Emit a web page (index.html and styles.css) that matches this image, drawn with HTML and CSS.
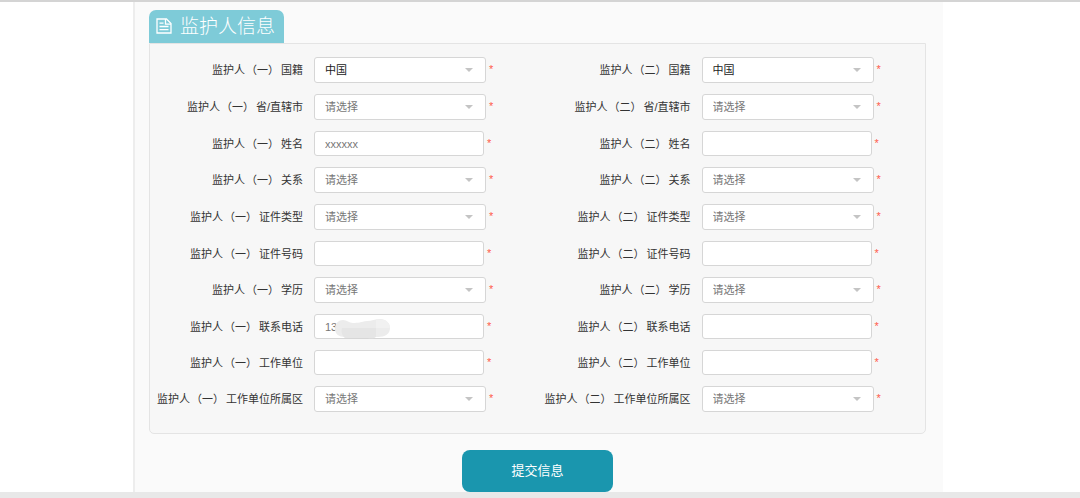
FILE: index.html
```html
<!DOCTYPE html>
<html lang="zh-CN">
<head>
<meta charset="utf-8">
<meta name="viewport" content="width=device-width, initial-scale=1">
<title>监护人信息</title>
<link rel="stylesheet" href="styles.css">
</head>
<body>
<main class="page">
  <form class="sheet" onsubmit="return false">
    <h1 class="tab">
      <svg class="tab-icon" viewBox="0 0 16 16" width="16" height="16" fill="none" stroke="currentColor" stroke-width="1.3" aria-hidden="true">
        <path d="M1 1h9.500l4.500 4.500V15H1z"/>
        <path d="M9.500 1v5.200H15"/>
        <path d="M3.500 5.200h4M3.500 8.500h9M3.500 11.700h9"/>
      </svg>
      <span>监护人信息</span>
    </h1>
    <section class="panel">
      <div class="field"><label for="a1">监护人<span class="no">（一）</span>国籍</label><span class="pick"><select id="a1" class="filled"><option>中国</option></select></span><i class="star">*</i></div>
      <div class="field"><label for="b1">监护人<span class="no">（二）</span>国籍</label><span class="pick"><select id="b1" class="filled"><option>中国</option></select></span><i class="star">*</i></div>
      <div class="field"><label for="a2">监护人<span class="no">（一）</span>省/直辖市</label><span class="pick"><select id="a2"><option>请选择</option></select></span><i class="star">*</i></div>
      <div class="field"><label for="b2">监护人<span class="no">（二）</span>省/直辖市</label><span class="pick"><select id="b2"><option>请选择</option></select></span><i class="star">*</i></div>
      <div class="field"><label for="a3">监护人<span class="no">（一）</span>姓名</label><input id="a3" type="text" value="xxxxxx"><i class="star">*</i></div>
      <div class="field"><label for="b3">监护人<span class="no">（二）</span>姓名</label><input id="b3" type="text"><i class="star">*</i></div>
      <div class="field"><label for="a4">监护人<span class="no">（一）</span>关系</label><span class="pick"><select id="a4"><option>请选择</option></select></span><i class="star">*</i></div>
      <div class="field"><label for="b4">监护人<span class="no">（二）</span>关系</label><span class="pick"><select id="b4"><option>请选择</option></select></span><i class="star">*</i></div>
      <div class="field"><label for="a5">监护人<span class="no">（一）</span>证件类型</label><span class="pick"><select id="a5"><option>请选择</option></select></span><i class="star">*</i></div>
      <div class="field"><label for="b5">监护人<span class="no">（二）</span>证件类型</label><span class="pick"><select id="b5"><option>请选择</option></select></span><i class="star">*</i></div>
      <div class="field"><label for="a6">监护人<span class="no">（一）</span>证件号码</label><input id="a6" type="text"><i class="star">*</i></div>
      <div class="field"><label for="b6">监护人<span class="no">（二）</span>证件号码</label><input id="b6" type="text"><i class="star">*</i></div>
      <div class="field"><label for="a7">监护人<span class="no">（一）</span>学历</label><span class="pick"><select id="a7"><option>请选择</option></select></span><i class="star">*</i></div>
      <div class="field"><label for="b7">监护人<span class="no">（二）</span>学历</label><span class="pick"><select id="b7"><option>请选择</option></select></span><i class="star">*</i></div>
      <div class="field"><label for="a8">监护人<span class="no">（一）</span>联系电话</label><span class="masked"><input id="a8" type="text" value="13"><svg class="smudge" viewBox="0 0 58 20" width="58" height="20" aria-hidden="true">
        <path fill="#ececec" d="M2 10C2 4 6 1 10 1c4 0 6 3 10 3 5 0 8-1 14-2 5 0 8-2 13-2 6 0 10 4 10 9 0 6-5 9-12 9H12C6 18 2 15 2 10z"/>
        <path fill="#e5e5e5" d="M9 9h34v9c-2 2-6 1-9 1H12c-3-2-4-6-3-10z"/>
        <path fill="#f1f1f1" d="M43 1c7-2 14 1 14 8H43z"/>
      </svg></span><i class="star">*</i></div>
      <div class="field"><label for="b8">监护人<span class="no">（二）</span>联系电话</label><input id="b8" type="text"><i class="star">*</i></div>
      <div class="field"><label for="a9">监护人<span class="no">（一）</span>工作单位</label><input id="a9" type="text"><i class="star">*</i></div>
      <div class="field"><label for="b9">监护人<span class="no">（二）</span>工作单位</label><input id="b9" type="text"><i class="star">*</i></div>
      <div class="field"><label for="a10">监护人<span class="no">（一）</span>工作单位所属区</label><span class="pick"><select id="a10"><option>请选择</option></select></span><i class="star">*</i></div>
      <div class="field"><label for="b10">监护人<span class="no">（二）</span>工作单位所属区</label><span class="pick"><select id="b10"><option>请选择</option></select></span><i class="star">*</i></div>
    </section>
    <button class="submit" type="submit">提交信息</button>
  </form>
</main>
</body>
</html>
```
FILE: styles.css
```css
* {
  box-sizing: border-box;
}

body {
  margin: 0;
  background: #fff;
  color: #333;
  font: 11px/16px "Liberation Sans", "Noto Sans CJK SC", sans-serif;
}

.page {
  padding-right: 4px;
  border-top: 2px solid #d4d4d4;
  border-bottom: 6px solid #e8e8e8;
}

.sheet {
  display: flex;
  flex-direction: column;
  align-items: center;
  max-width: 810px;
  margin: 0 auto;
  padding: 8px 17px 0 14px;
  border-left: 2px solid #ededed;
  background: #fafafa;
}

.tab {
  display: flex;
  align-items: center;
  align-self: flex-start;
  gap: 8px;
  height: 33px;
  margin: 0;
  padding: 0 9px 0 7px;
  border-radius: 7px 7px 0 0;
  background: #7ecbd8;
  color: #fff;
  font-size: 19px;
  font-weight: 300;
  line-height: 32px;
}

.tab-icon {
  margin-bottom: 2px;
}

.panel {
  display: grid;
  grid-template-columns: 1fr 1fr;
  row-gap: 11px;
  width: 100%;
  padding: 13px 0 21px;
  border: 1px solid #e4e4e4;
  border-radius: 0 0 5px 5px;
  background: #f7f7f7;
}

.field {
  display: grid;
  grid-template-columns: 153px auto 1fr;
  align-items: center;
}

.field label {
  text-align: right;
  white-space: nowrap;
}

.no {
  margin: 0 2px 0 1px;
}

.pick,
.masked,
.field > input {
  margin-left: 11px;
}

.pick,
.masked {
  position: relative;
  display: flex;
}

select,
input {
  margin: 0;
  padding: 0 10px;
  border: 1px solid #d6d6d6;
  border-radius: 3px;
  background: #fff;
  color: #777;
  font: inherit;
}

select {
  appearance: none;
  width: 172px;
  height: 26px;
}

input {
  width: 170px;
  height: 25px;
}

.filled {
  color: #222;
}

.pick::after {
  content: "";
  position: absolute;
  top: 11px;
  right: 13px;
  border: 4px solid transparent;
  border-top-color: #c4c4c4;
  border-bottom-width: 0;
  pointer-events: none;
}

.smudge {
  position: absolute;
  top: 5px;
  left: 19px;
}

.star {
  align-self: start;
  padding: 4px 0 0 3px;
  color: #ff5a4a;
  font-style: normal;
}

.submit {
  width: 151px;
  height: 42px;
  margin-top: 16px;
  padding: 0;
  border: 0;
  border-radius: 8px;
  background: #1a96ae;
  color: #fff;
  font: 13px/20px "Liberation Sans", "Noto Sans CJK SC", sans-serif;
}

@media (max-width: 800px) {
  .panel {
    grid-template-columns: 1fr;
  }
}
```
